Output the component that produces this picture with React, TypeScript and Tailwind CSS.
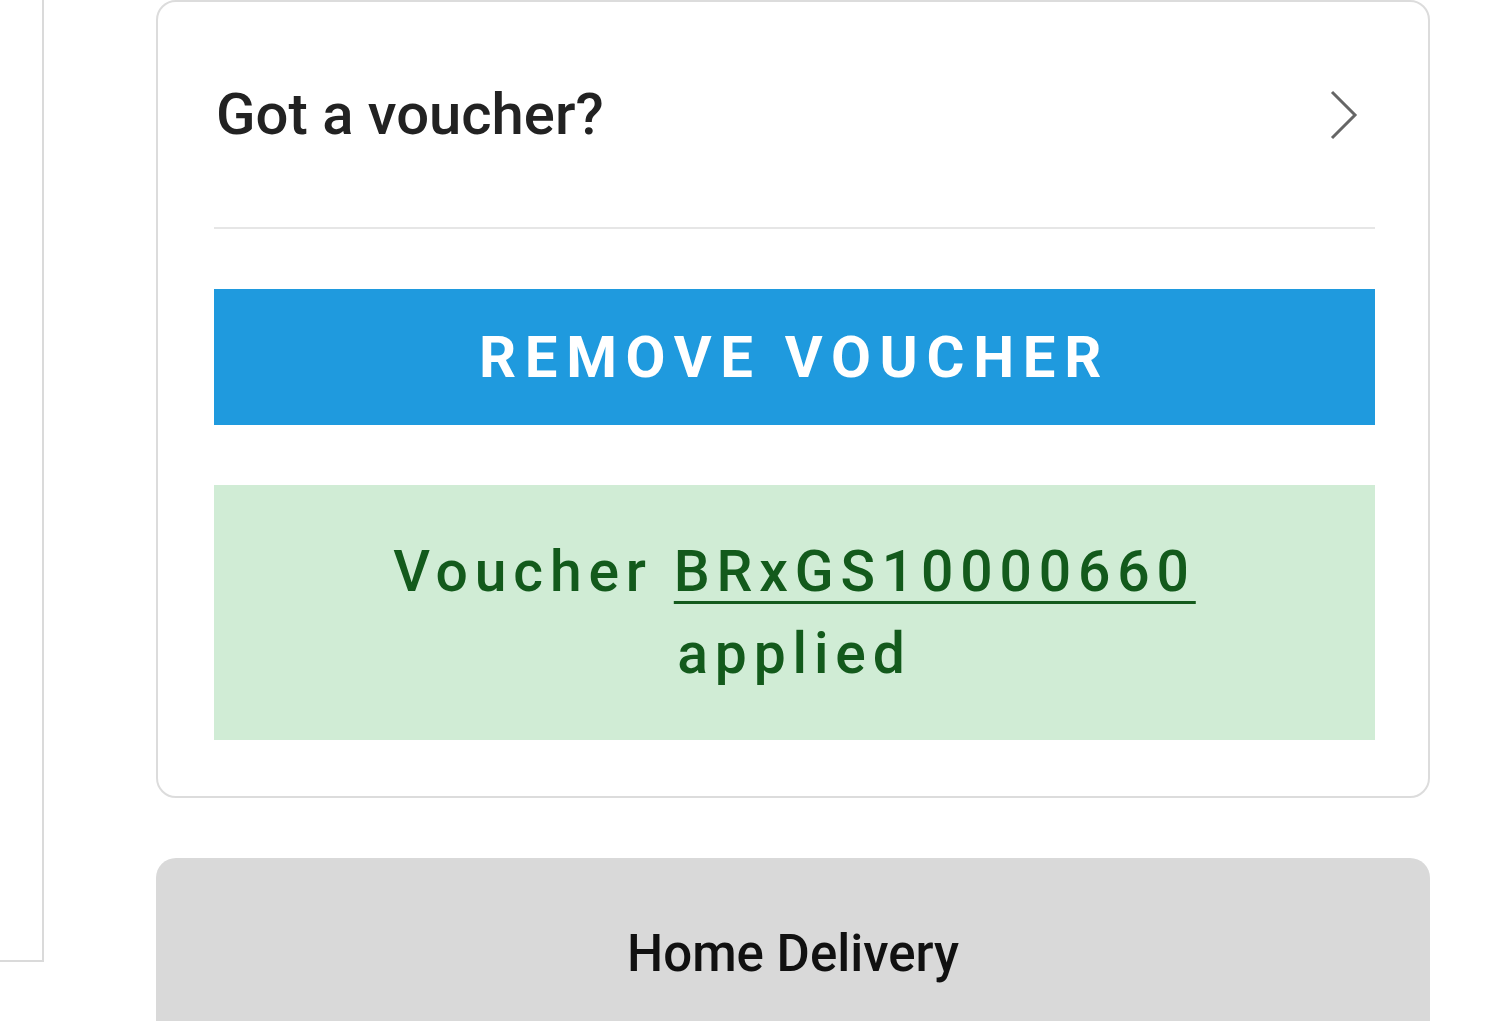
export default function App() {
  return (
    <div className="flex min-h-[1021px] items-start overflow-hidden bg-white font-['Roboto',sans-serif]">
      <div className="h-[962px] w-[44px] shrink-0 border-b-2 border-r-2 border-[#dadada]" />

      <div className="ml-[112px] flex w-[1274px] shrink-0 flex-col gap-[60px]">
        <div className="rounded-[20px] border-2 border-[#dcdcdc] pb-[56px] pl-[56px] pr-[53px]">
          <button
            type="button"
            className="flex h-[227px] w-full items-center justify-between border-b-2 border-[#e6e6e6] pl-[2px] pr-[17px]"
          >
            <span className="text-[58px] font-medium text-[#222]">Got a voucher?</span>
            <svg width="28" height="50" viewBox="0 0 28 50" fill="none" className="text-[#666]">
              <path d="M2 2 L25 25 L2 48" stroke="currentColor" strokeWidth="3" />
            </svg>
          </button>

          <button
            type="button"
            className="mt-[60px] flex h-[136px] w-full items-center justify-center bg-[#1f9ade] text-[58px] font-bold tracking-[0.15em] text-white"
          >
            REMOVE VOUCHER
          </button>

          <div className="mt-[60px] flex h-[255px] items-center justify-center bg-[#d0ecd5] px-[80px] text-center text-[57px] font-medium leading-[82px] tracking-[0.12em] text-[#135a1c]">
            <p>
              Voucher{" "}
              <a href="#" className="underline decoration-[3px] underline-offset-[10px]">
                BRxGS10000660
              </a>{" "}
              applied
            </p>
          </div>
        </div>

        <div className="flex h-[200px] justify-center rounded-t-[20px] bg-[#d9d9d9] pt-[58px]">
          <span className="text-[51px] font-medium text-[#111]">Home Delivery</span>
        </div>
      </div>
    </div>
  );
}
